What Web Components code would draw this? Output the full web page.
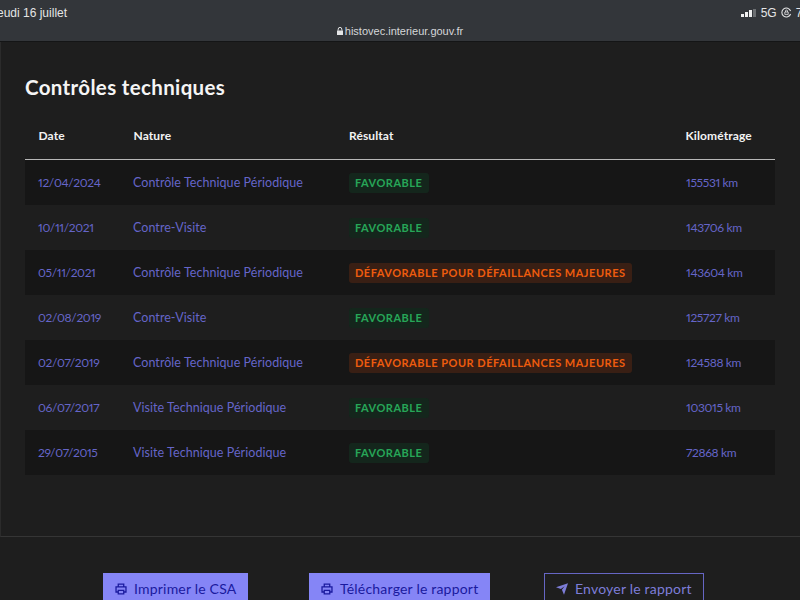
<!DOCTYPE html>
<html lang="fr">
<head>
<meta charset="utf-8">
<title>Contrôles techniques</title>
<style>
  html, body { margin: 0; padding: 0; height: 600px; overflow: hidden; background: #1e1e1e; }
  body { font-family: Lato, "Noto Sans", sans-serif; }
</style>
</head>
<body>

<template id="status-tpl">
  <style>
    :host {
      display: block; box-sizing: border-box; height: 42px; background: #33363a;
      border-bottom: 1px solid #141516; position: relative; overflow: hidden;
      font-family: "Liberation Sans", Arial, sans-serif; color: #e4e5e6;
    }
    .top { display: flex; justify-content: space-between; height: 25px; align-items: center; margin-left: -9px; margin-right: -9px; font-size: 12px; }
    .right { display: flex; align-items: center; gap: 4px; }
    .bars { display: flex; align-items: flex-end; gap: 1px; height: 8px; margin-right: 1px; }
    .bars i { display: block; width: 3px; background: #f0f0f0; }
    .bars i:last-child { background: #6c6f72; }
    .url { display: flex; justify-content: center; align-items: center; gap: 2px; font-size: 11px; height: 12px; color: #d5d7d9; }
  </style>
  <div class="top">
    <span>Jeudi 16 juillet</span>
    <span class="right">
      <span class="bars"><i style="height:3px"></i><i style="height:5px"></i><i style="height:7px"></i><i style="height:8px"></i></span>
      <span>5G</span>
      <svg width="11" height="11" viewBox="0 0 11 11" fill="none" stroke="#e4e5e6"><path d="M9.6 7A4.5 4.5 0 1 1 9.6 4" stroke-width="1.1"/><path d="M3.8 5h3.4v2.4H3.8zM4.5 5V4a1 1 0 0 1 2 0v1" stroke-width=".8"/></svg>
      <span>71</span>
    </span>
  </div>
  <div class="url">
    <svg width="6" height="8" viewBox="0 0 6 8"><path d="M0 3.5h6V8H0z" fill="#e4e5e6"/><path d="M1.2 3.5V2.2a1.8 1.8 0 0 1 3.6 0v1.3" fill="none" stroke="#e4e5e6"/></svg>
    <span>histovec.interieur.gouv.fr</span>
  </div>
</template>

<template id="badge-tpl">
  <style>
    :host {
      display: inline-block; height: 20px; line-height: 20px; padding: 0 6.5px; border-radius: 3px;
      font-size: 11px; font-weight: 700; letter-spacing: .5px; white-space: nowrap;
      background: #14261c; color: #27a658;
    }
    :host([tone="warn"]) { background: #391f14; color: #ee5c0e; }
  </style>
  <slot></slot>
</template>

<template id="row-tpl">
  <style>
    :host {
      display: grid; grid-template-columns: 95px 215.5px 337.5px 1fr; align-items: center;
      height: 45px; padding-left: 13px; font-size: 12.5px; letter-spacing: .05px; color: #6565c8; background: #161616;
    }
    :host(:nth-of-type(even)) { background: #1e1e1e; }
    .num { font-variant-numeric: proportional-nums; font-size: 12px; letter-spacing: -.35px; }
  </style>
  <span id="date" class="num"></span><span id="nature"></span><span><slot></slot></span><span id="km" class="num"></span>
</template>

<template id="table-tpl">
  <style>
    :host { display: block; }
    .head {
      display: grid; grid-template-columns: 95px 215.5px 336.5px 1fr; align-items: center;
      height: 48px; padding-left: 13.5px; border-bottom: 1px solid #b8b8b8;
      font-size: 12px; font-weight: 700; letter-spacing: .1px; color: #f2f2f2;
    }
  </style>
  <div class="head"><span>Date</span><span>Nature</span><span>Résultat</span><span>Kilométrage</span></div>
  <slot></slot>
</template>

<template id="section-tpl">
  <style>
    :host {
      display: block; box-sizing: border-box; height: 495px; padding: 32px 25px 0 24px;
      border-left: 1px solid #2b2b2b; border-bottom: 1px solid #353535;
    }
    h2 { margin: 0 0 11px; font-size: 20.5px; line-height: 26px; font-weight: 700; letter-spacing: .35px; color: #f5f5f5; }
  </style>
  <h2><slot name="title"></slot></h2>
  <slot></slot>
</template>

<template id="button-tpl">
  <style>
    :host {
      display: inline-flex; align-items: center; gap: 7px; box-sizing: border-box; height: 31px;
      padding: 0 12px; font-size: 14px; letter-spacing: .2px; white-space: nowrap;
      background: #8585f6; color: #1a1a9e;
    }
    :host([outline]) { background: transparent; color: #7d7dd8; box-shadow: inset 0 0 0 1px #6666c4; }
    ::slotted(svg) { display: block; flex: none; }
  </style>
  <slot name="icon"></slot><slot></slot>
</template>

<template id="actions-tpl">
  <style>
    :host { display: grid; grid-template-columns: 206px 235px auto; justify-content: start; justify-items: start; padding: 36px 0 0 103px; }
  </style>
  <slot></slot>
</template>

<status-bar></status-bar>
<report-section>
  <span slot="title">Contrôles techniques</span>
  <ct-table>
    <ct-row date="12/04/2024" nature="Contrôle Technique Périodique" km="155531 km"><ct-badge>FAVORABLE</ct-badge></ct-row>
    <ct-row date="10/11/2021" nature="Contre-Visite" km="143706 km"><ct-badge>FAVORABLE</ct-badge></ct-row>
    <ct-row date="05/11/2021" nature="Contrôle Technique Périodique" km="143604 km"><ct-badge tone="warn">DÉFAVORABLE POUR DÉFAILLANCES MAJEURES</ct-badge></ct-row>
    <ct-row date="02/08/2019" nature="Contre-Visite" km="125727 km"><ct-badge>FAVORABLE</ct-badge></ct-row>
    <ct-row date="02/07/2019" nature="Contrôle Technique Périodique" km="124588 km"><ct-badge tone="warn">DÉFAVORABLE POUR DÉFAILLANCES MAJEURES</ct-badge></ct-row>
    <ct-row date="06/07/2017" nature="Visite Technique Périodique" km="103015 km"><ct-badge>FAVORABLE</ct-badge></ct-row>
    <ct-row date="29/07/2015" nature="Visite Technique Périodique" km="72868 km"><ct-badge>FAVORABLE</ct-badge></ct-row>
  </ct-table>
</report-section>
<action-bar>
  <ct-button>
    <svg slot="icon" width="12" height="12" viewBox="0 0 14 14" fill="none" stroke="#1a1a9e" stroke-width="1.5"><path d="M3.8 4.5V1.2h6.4v3.3M3.5 10.5H1.2v-6h11.6v6h-2.3"/><path d="M3.8 8.5h6.4v4.3H3.8z"/></svg>
    Imprimer le CSA
  </ct-button>
  <ct-button>
    <svg slot="icon" width="12" height="12" viewBox="0 0 14 14" fill="none" stroke="#1a1a9e" stroke-width="1.5"><path d="M3.8 4.5V1.2h6.4v3.3M3.5 10.5H1.2v-6h11.6v6h-2.3"/><path d="M3.8 8.5h6.4v4.3H3.8z"/></svg>
    Télécharger le rapport
  </ct-button>
  <ct-button outline>
    <svg slot="icon" width="12" height="12" viewBox="0 0 12 12" fill="#7d7dd8"><path d="M12 .2 8 11.8 5.9 6.8 8.6 3.2 4.9 5.9 0 4.2z"/></svg>
    Envoyer le rapport
  </ct-button>
</action-bar>

<script>
  function plain(id) {
    return class extends HTMLElement {
      constructor() {
        super();
        this.attachShadow({ mode: 'open' })
          .appendChild(document.getElementById(id).content.cloneNode(true));
      }
    };
  }

  customElements.define('status-bar', plain('status-tpl'));
  customElements.define('report-section', plain('section-tpl'));
  customElements.define('ct-table', plain('table-tpl'));
  customElements.define('ct-badge', plain('badge-tpl'));
  customElements.define('ct-button', plain('button-tpl'));
  customElements.define('action-bar', plain('actions-tpl'));

  customElements.define('ct-row', class extends plain('row-tpl') {
    connectedCallback() {
      for (const key of ['date', 'nature', 'km']) {
        this.shadowRoot.getElementById(key).textContent = this.getAttribute(key);
      }
    }
  });
</script>
</body>
</html>
